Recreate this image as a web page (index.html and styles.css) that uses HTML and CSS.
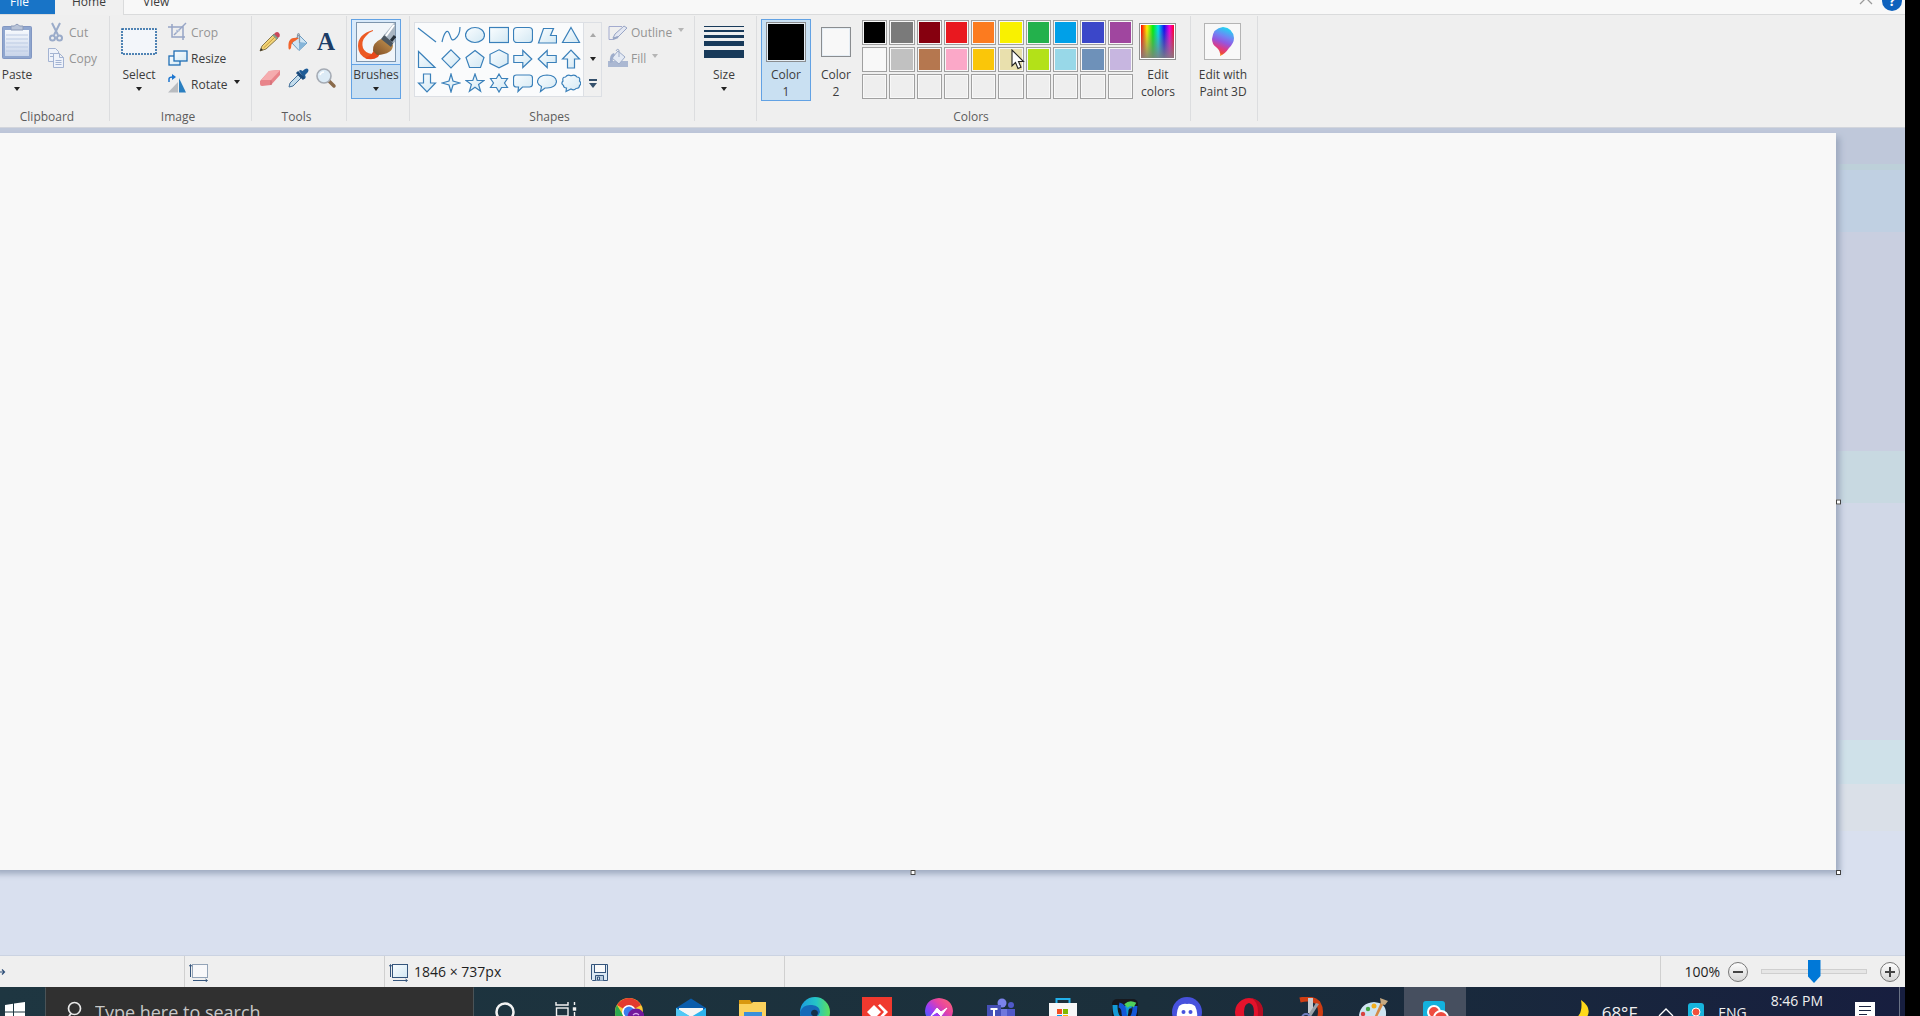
FILE: index.html
```html
<!DOCTYPE html>
<html lang="en">
<head>
    <meta charset="UTF-8">
    <meta name="viewport" content="width=device-width, initial-scale=1.0">
    <title>Untitled - Paint</title>
    <link rel="stylesheet" href="styles.css">
</head>
<body>
<!-- Shared gradients -->
<svg class="defs" width="0" height="0" aria-hidden="true">
    <defs>
        <linearGradient id="shapeFill" x1="0" y1="0" x2="1" y2="1"><stop offset="0" stop-color="#fafdff"/><stop offset="1" stop-color="#d3e8f3"/></linearGradient>
        <linearGradient id="boardFill" x1="0" y1="0" x2="0" y2="1"><stop offset="0" stop-color="#f6f9fd"/><stop offset="1" stop-color="#c9d5ea"/></linearGradient>
        <linearGradient id="rainbow"><stop offset="0" stop-color="#f00"/><stop offset=".18" stop-color="#fe0"/><stop offset=".36" stop-color="#0e1"/><stop offset=".52" stop-color="#0de"/><stop offset=".7" stop-color="#11e"/><stop offset=".86" stop-color="#e0d"/><stop offset="1" stop-color="#f02"/></linearGradient>
        <linearGradient id="greyFade" x1="0" y1="0" x2="0" y2="1"><stop offset=".1" stop-color="#808080" stop-opacity="0"/><stop offset="1" stop-color="#808080" stop-opacity=".9"/></linearGradient>
        <linearGradient id="dropFill" x1=".6" y1="0" x2=".3" y2="1"><stop offset="0" stop-color="#1fd6f2"/><stop offset=".3" stop-color="#6f86f4"/><stop offset=".5" stop-color="#9357e0"/><stop offset=".72" stop-color="#dd3b86"/><stop offset=".88" stop-color="#ee4a3c"/><stop offset="1" stop-color="#ffc400"/></linearGradient>
        <linearGradient id="edgeFill" x1="0" y1="0" x2="1" y2="0"><stop offset="0" stop-color="#1c9be0"/><stop offset=".55" stop-color="#25c5c5"/><stop offset="1" stop-color="#5fe05a"/></linearGradient>
        <linearGradient id="msgFill" x1="1" y1="0" x2="0" y2="1"><stop offset="0" stop-color="#ff6a6a"/><stop offset=".35" stop-color="#e643a5"/><stop offset=".6" stop-color="#9a3cf7"/><stop offset="1" stop-color="#0a7cff"/></linearGradient>
        <linearGradient id="bristle" x1="0" y1="1" x2="1" y2="0"><stop offset="0" stop-color="#7d4a22"/><stop offset="1" stop-color="#c99a55"/></linearGradient>
    </defs>
</svg>

<div class="desktop">
    <!-- Tabs -->
    <nav class="tabs">
        <button class="tab tab-file">File</button>
        <button class="tab tab-home">Home</button>
        <button class="tab tab-view">View</button>
        <div class="tabs-right">
            <button class="icon-btn" aria-label="Minimize the ribbon">
                <svg width="14" height="8" viewBox="0 0 14 8"><path d="M1 7l6-6 6 6" fill="none" stroke="#9a9a9a" stroke-width="1.3"/></svg>
            </button>
            <button class="help">?</button>
        </div>
    </nav>

    <!-- Ribbon -->
    <div class="ribbon">
        <section class="group group-clipboard">
            <div class="group-body">
                <button class="big-btn">
                    <span class="big-icon">
                        <svg width="32" height="38" viewBox="0 0 32 38">
                            <rect x="1.5" y="3.500" width="29" height="32" rx="1" fill="#8fa6cf" stroke="#8297c2"/>
                            <rect x="4" y="7" width="24" height="26" fill="url(#boardFill)"/>
                            <path d="M10 3h3.500q2.500-3.500 5 0H22v4H10z" fill="#b9c4d8" stroke="#8b9ab8"/>
                            <path d="M5 12h22M5 16h22M5 20h22M5 24h22M5 28h22" stroke="#bccbe4"/>
                        </svg>
                    </span>
                    <span class="big-label">Paste</span>
                    <span class="arrow"></span>
                </button>
                <div class="stack">
                    <button class="row-btn off">
                        <svg width="20" height="20" viewBox="0 0 20 20" fill="none" stroke="#9aabc9" stroke-width="2"><path d="M6 1l6 12M14 1L8 13"/><circle cx="6.500" cy="16" r="2.500"/><circle cx="13.500" cy="16" r="2.500"/></svg>
                        Cut
                    </button>
                    <button class="row-btn off">
                        <svg width="20" height="20" viewBox="0 0 20 20" fill="#eef2fa" stroke="#a3b3d2"><path d="M2.500.5h7l3 3v10h-10zM4 5.500h5M4 8.500h5"/><path d="M7.500 5.500h6l4 4v10h-10zM13.500 5.500v4h4M9.500 12.500h6M9.500 14.500h6M9.500 16.500h6"/></svg>
                        Copy
                    </button>
                </div>
            </div>
            <div class="group-name">Clipboard</div>
        </section>

        <section class="group group-image">
            <div class="group-body">
                <button class="big-btn">
                    <span class="big-icon">
                        <svg width="36" height="28" viewBox="0 0 36 28"><rect x="1" y="1" width="34" height="25" fill="#f3f6fa" stroke="#1b5f9e" stroke-width="1.500" stroke-dasharray="2 1"/></svg>
                    </span>
                    <span class="big-label">Select</span>
                    <span class="arrow"></span>
                </button>
                <div class="stack">
                    <button class="row-btn off">
                        <svg width="20" height="20" viewBox="0 0 20 20" fill="none" stroke="#97a5c6" stroke-width="1.500"><path d="M4 2v13h13M0 5h15v13"/><path d="M6 13L18 1"/><path d="M8 8.500h4M8 11h1" stroke="#b9c5dc"/></svg>
                        Crop
                    </button>
                    <button class="row-btn">
                        <svg width="20" height="20" viewBox="0 0 20 20" fill="url(#shapeFill)" stroke="#1f6eb4" stroke-width="1.300"><rect x="1" y="8" width="11" height="9"/><rect x="6" y="3" width="13" height="10"/></svg>
                        Resize
                    </button>
                    <button class="row-btn">
                        <svg width="20" height="20" viewBox="0 0 20 20"><path d="M0 18.500L10 8v10.500z" fill="#b9bcc0"/><path d="M11 18.500V4l7 14.500z" fill="#2a7fc0"/><path d="M1 8V5q0-2 4-2" fill="none" stroke="#1c76d0" stroke-width="1.500"/><path d="M4 0l4 3-4 3z" fill="#1c76d0"/></svg>
                        Rotate <span class="arrow"></span>
                    </button>
                </div>
            </div>
            <div class="group-name">Image</div>
        </section>

        <section class="group group-tools">
            <div class="group-body">
                <div class="tool-grid">
                    <button class="icon-btn" aria-label="Pencil">
                        <svg width="22" height="22" viewBox="0 0 22 22"><path d="M1 20l2-5L15 3l4 4L7 18z" fill="#f2d478" stroke="#6d5a2c" stroke-width=".8"/><path d="M15 3l1.500-1.500q2-1 3.500.5t.5 3.500L19 7z" fill="#c9485b"/><path d="M13.500 4.500L15 3l4 4-1.500 1.500z" fill="#7f9f96"/><path d="M1 20l1-3 2 2z" fill="#333"/><path d="M4.500 17L16.500 5.500" stroke="#c79b3a"/></svg>
                    </button>
                    <button class="icon-btn" aria-label="Fill with color">
                        <svg width="22" height="22" viewBox="0 0 22 22"><path d="M12 4l8 8-8 7.500L5 12z" fill="#cfe5f4" stroke="#6d9cc0"/><path d="M12 11l8 1-8 7.500z" fill="#86b5d9"/><path d="M12.500 12V4q-1-3-2 0v4" fill="none" stroke="#8b98a5" stroke-width="1.200"/><path d="M12 7Q5 6 3 9q-2 2-1.500 8Q2 20 4 17q0-6 4-7z" fill="#f2642c"/></svg>
                    </button>
                    <button class="icon-btn text-tool" aria-label="Text">A</button>
                    <button class="icon-btn" aria-label="Eraser">
                        <svg width="22" height="22" viewBox="0 0 22 22"><path d="M2 13L10 4l10-1q1 0 1 1v4l-9 10-9 1q-2 0-2-2v-3z" fill="#e8848a"/><path d="M2 13L10 4l10-1q1 0 .5 1l-8.500 9z" fill="#f5acae"/><path d="M12 13.500V18" stroke="#c8646c"/></svg>
                    </button>
                    <button class="icon-btn" aria-label="Color picker">
                        <svg width="22" height="22" viewBox="0 0 22 22"><path d="M2 20l1-4 8-8 3 3-8 8z" fill="#c3dcec" stroke="#44719a"/><path d="M12 4l1-1q1.500 0 2.500 1L18 2q2-1 3 0t0 3l-3 3q1 1.500.5 3l-1 1z" fill="#1f5c97"/><path d="M10 5l7 7" stroke="#1a4a7c" stroke-width="3"/></svg>
                    </button>
                    <button class="icon-btn" aria-label="Magnifier">
                        <svg width="22" height="22" viewBox="0 0 22 22"><path d="M14 14l5 5" stroke="#8a6a4a" stroke-width="3.500" stroke-linecap="round"/><circle cx="9" cy="9" r="7" fill="#dcebf6" stroke="#a5abb4" stroke-width="1.600"/><path d="M5 8q1-3 4-3" fill="none" stroke="#fff" stroke-width="1.500"/></svg>
                    </button>
                </div>
            </div>
            <div class="group-name">Tools</div>
        </section>

        <section class="group group-brushes">
            <div class="group-body">
                <button class="big-btn picked split">
                    <span class="big-icon">
                        <svg width="40" height="40" viewBox="0 0 40 40">
                            <rect x=".5" y=".5" width="39" height="39" fill="#f1f5f9" stroke="#7d95ad"/>
                            <path d="M17 8Q2 12 2 24q0 9 9 13l8-1-3-4q-7-1-9-6-2-7 3-12 3-4 7-5z" fill="#ec5a24"/>
                            <path d="M9 36q7 3 13-1l3-5-6-4q-2 7-10 10z" fill="#e8481b"/>
                            <path d="M17 29q-1-8 8-12l6 1 6 5q0 9-16 10z" fill="url(#bristle)"/>
                            <path d="M25 17l4-5 9 8-3 5z" fill="#4b5660"/>
                            <path d="M28 13L38 1h1v19l-2 1z" fill="#a9b6c3"/>
                            <path d="M30 14l8-11" stroke="#fff" stroke-width="2"/>
                            <path d="M35 19l4-5" stroke="#27313b" stroke-width="3"/>
                        </svg>
                    </span>
                    <span class="big-label">Brushes</span>
                    <span class="arrow"></span>
                </button>
            </div>
        </section>

        <section class="group group-shapes">
            <div class="group-body">
                <div class="gallery">
                    <div class="shape-grid">
                        <button class="shape" aria-label="Line"><svg viewBox="0 0 20 20"><path d="M1 3l18 14"/></svg></button>
                        <button class="shape" aria-label="Curve"><svg viewBox="0 0 20 20"><path d="M1 17C3 8 6 4 8 8s2 9 6 6 5-7 5-12" fill="none"/></svg></button>
                        <button class="shape" aria-label="Oval"><svg viewBox="0 0 20 20"><ellipse cx="10" cy="10" rx="9.500" ry="7.500"/></svg></button>
                        <button class="shape" aria-label="Rectangle"><svg viewBox="0 0 20 20"><rect x=".5" y="2.500" width="19" height="15"/></svg></button>
                        <button class="shape" aria-label="Rounded rectangle"><svg viewBox="0 0 20 20"><rect x=".5" y="2.500" width="19" height="15" rx="3.500"/></svg></button>
                        <button class="shape" aria-label="Polygon"><svg viewBox="0 0 20 20"><path d="M6.500 3.500h10l-3 7h6v7.500h-18z"/></svg></button>
                        <button class="shape" aria-label="Triangle"><svg viewBox="0 0 20 20"><path d="M10 2.500L18.500 17.500h-17z"/></svg></button>

                        <button class="shape" aria-label="Right triangle"><svg viewBox="0 0 20 20"><path d="M1.500 2.500l16.500 16h-16.500z"/></svg></button>
                        <button class="shape" aria-label="Diamond"><svg viewBox="0 0 20 20"><path d="M10 .8l9 9-9 9-9-9z"/></svg></button>
                        <button class="shape" aria-label="Pentagon"><svg viewBox="0 0 20 20"><path d="M10 1.500l9 7-3.500 10h-11L1 8.500z"/></svg></button>
                        <button class="shape" aria-label="Hexagon"><svg viewBox="0 0 20 20"><path d="M10 .8l9 4.500v9l-9 4.500-9-4.500v-9z"/></svg></button>
                        <button class="shape" aria-label="Right arrow"><svg viewBox="0 0 20 20"><path d="M.8 6.500h9v-5l9 8.500-9 8.500v-5h-9z"/></svg></button>
                        <button class="shape" aria-label="Left arrow"><svg viewBox="0 0 20 20"><path d="M19.200 6.500h-9v-5l-9 8.500 9 8.500v-5h9z"/></svg></button>
                        <button class="shape" aria-label="Up arrow"><svg viewBox="0 0 20 20"><path d="M6.500 19v-9h-5L10 1l8.500 9h-5v9z"/></svg></button>

                        <button class="shape" aria-label="Down arrow"><svg viewBox="0 0 20 20"><path d="M6.500 1v9h-5l8.500 9 8.500-9h-5V1z"/></svg></button>
                        <button class="shape" aria-label="Four-point star"><svg viewBox="0 0 20 20"><path d="M10 1l2 7 7 2-7 2-2 7-2-7-7-2 7-2z"/></svg></button>
                        <button class="shape" aria-label="Five-point star"><svg viewBox="0 0 20 20"><path d="M10 1l2.200 6.500H19l-5.400 4 2 6.800L10 14.300l-5.600 4 2-6.800L1 7.500h6.800z"/></svg></button>
                        <button class="shape" aria-label="Six-point star"><svg viewBox="0 0 20 20"><path d="M10 1l2.600 4.500H18.500L15.500 10l3 4.500h-5.900L10 19l-2.600-4.500H1.500l3-4.500-3-4.500h5.900z"/></svg></button>
                        <button class="shape" aria-label="Rounded callout"><svg viewBox="0 0 20 20"><path d="M3.500 2h13q3 0 3 3v6q0 3-3 3H9.500l-4.500 4.500.5-4.500h-2q-3 0-3-3V5q0-3 3-3z"/></svg></button>
                        <button class="shape" aria-label="Oval callout"><svg viewBox="0 0 20 20"><path d="M3.500 18.500l1-5Q.5 11.500.5 8.500q.5-6 9.500-6.500 9 .5 9.500 6.500-.5 6-9.500 6.500H8z"/></svg></button>
                        <button class="shape" aria-label="Cloud callout"><svg viewBox="0 0 20 20"><path d="M5 18.500l.5-3.500q-3 0-3-2.500-3-2-.5-4.500Q1 4 4.500 4q2-3 5.500-1.200 4-2 6 1.200 3.500 0 2.500 4 2.500 2.500 0 4.500 0 3-3.500 3-2 2.500-5 .5z"/></svg></button>
                    </div>
                    <div class="gallery-scroll">
                        <button aria-label="Scroll up"><span class="arrow up"></span></button>
                        <button aria-label="Scroll down"><span class="arrow"></span></button>
                        <button aria-label="More shapes"><span class="more"></span><span class="arrow slate"></span></button>
                    </div>
                </div>
                <div class="stack">
                    <button class="row-btn off">
                        <svg width="20" height="20" viewBox="0 0 20 20"><path d="M14 4.500H1v13h4L16 8" fill="none" stroke="#a3abcf"/><path d="M5 16l2-4 9-8 3 2-9 9z" fill="#e3e7f2" stroke="#98a5c5"/><path d="M5 17l5-2" stroke="#98a5c5" stroke-width="2"/></svg>
                        Outline <span class="arrow"></span>
                    </button>
                    <button class="row-btn off">
                        <svg width="20" height="20" viewBox="0 0 20 20"><path d="M0 13h20v6H0z" fill="#abb8d2"/><path d="M10 3l7 6-6 7-7-6z" fill="#e4eaf4" stroke="#9cabc8"/><path d="M11 9V2q-2-2-3 1" fill="none" stroke="#9cabc8"/><path d="M6 5q-5 1-4 10l3-1q-1-4 2-7z" fill="#9eadcb"/></svg>
                        Fill <span class="arrow"></span>
                    </button>
                </div>
            </div>
            <div class="group-name">Shapes</div>
        </section>

        <section class="group group-size">
            <div class="group-body">
                <button class="big-btn">
                    <span class="big-icon">
                        <svg width="40" height="34" viewBox="0 0 40 34" fill="#183a5a"><path d="M0 1h40v1H0zM0 5h40v2H0zM0 10h40v3H0zM0 16h40v5H0zM0 25h40v8H0z"/></svg>
                    </span>
                    <span class="big-label">Size</span>
                    <span class="arrow"></span>
                </button>
            </div>
        </section>

        <section class="group group-colors">
            <div class="group-body">
                <button class="big-btn picked">
                    <span class="big-icon"><span class="well well-front"></span></span>
                    <span class="big-label">Color<br>1</span>
                </button>
                <button class="big-btn">
                    <span class="big-icon"><span class="well well-back"></span></span>
                    <span class="big-label">Color<br>2</span>
                </button>
                <div class="palette">
                    <button class="swatch black" aria-label="Black"></button>
                    <button class="swatch gray" aria-label="Gray-50%"></button>
                    <button class="swatch dark-red" aria-label="Dark red"></button>
                    <button class="swatch red" aria-label="Red"></button>
                    <button class="swatch orange" aria-label="Orange"></button>
                    <button class="swatch yellow" aria-label="Yellow"></button>
                    <button class="swatch green" aria-label="Green"></button>
                    <button class="swatch turquoise" aria-label="Turquoise"></button>
                    <button class="swatch indigo" aria-label="Indigo"></button>
                    <button class="swatch purple" aria-label="Purple"></button>
                    <button class="swatch white" aria-label="White"></button>
                    <button class="swatch light-gray" aria-label="Gray-25%"></button>
                    <button class="swatch brown" aria-label="Brown"></button>
                    <button class="swatch rose" aria-label="Rose"></button>
                    <button class="swatch gold" aria-label="Gold"></button>
                    <button class="swatch light-yellow" aria-label="Light yellow"></button>
                    <button class="swatch lime" aria-label="Lime"></button>
                    <button class="swatch light-turquoise" aria-label="Light turquoise"></button>
                    <button class="swatch blue-gray" aria-label="Blue-gray"></button>
                    <button class="swatch lavender" aria-label="Lavender"></button>
                    <button class="swatch" aria-label="Custom 1"></button>
                    <button class="swatch" aria-label="Custom 2"></button>
                    <button class="swatch" aria-label="Custom 3"></button>
                    <button class="swatch" aria-label="Custom 4"></button>
                    <button class="swatch" aria-label="Custom 5"></button>
                    <button class="swatch" aria-label="Custom 6"></button>
                    <button class="swatch" aria-label="Custom 7"></button>
                    <button class="swatch" aria-label="Custom 8"></button>
                    <button class="swatch" aria-label="Custom 9"></button>
                    <button class="swatch" aria-label="Custom 10"></button>
                    <!-- mouse pointer -->
                    <svg class="pointer" width="14" height="21" viewBox="0 0 14 21"><path d="M1 1v16l3.500-3.500L7 19.500l3-1.200L7.500 12.500h5z" fill="#fff" stroke="#222" stroke-width="1.100"/></svg>
                </div>
                <button class="big-btn">
                    <span class="big-icon">
                        <svg width="38" height="38" viewBox="0 0 38 38"><rect x=".5" y=".5" width="36" height="36" fill="#fff" stroke="#909090"/><rect x="2" y="2" width="33" height="33" fill="url(#rainbow)"/><rect x="2" y="2" width="33" height="33" fill="url(#greyFade)"/></svg>
                    </span>
                    <span class="big-label">Edit<br>colors</span>
                </button>
            </div>
            <div class="group-name">Colors</div>
        </section>

        <section class="group group-3d">
            <div class="group-body">
                <button class="big-btn wide">
                    <span class="big-icon">
                        <svg width="38" height="38" viewBox="0 0 38 38"><rect x=".5" y=".5" width="36" height="36" fill="#f8f8f8" stroke="#b4b4b4"/><path d="M16 33q1-5-4-9-4-3-4-8Q9 5 19 4q10 1 11 11 0 5-5 10-4 6-9 8z" fill="url(#dropFill)"/></svg>
                    </span>
                    <span class="big-label">Edit with<br>Paint 3D</span>
                </button>
            </div>
        </section>
    </div>

    <!-- Drawing area -->
    <main class="workspace">
        <div class="sheet">
            <span class="handle handle-right"></span>
            <span class="handle handle-bottom"></span>
            <span class="handle handle-corner"></span>
        </div>
    </main>

    <!-- Status bar -->
    <footer class="status">
        <div class="status-cell cell-first">
            <svg width="6" height="8" viewBox="0 0 6 8"><path d="M0 4h4M2 1.500L4.500 4 2 6.500" fill="none" stroke="#2e4e78" stroke-width="1.200"/></svg>
        </div>
        <div class="status-cell">
            <svg width="20" height="20" viewBox="0 0 20 20" fill="none" stroke="#35557c"><path d="M1.500 3v12M0 4.500l1.500-2L3 4.500M4 18.500h14M16.500 17l2 1.500-2 1.500"/><rect x="3.500" y="2.500" width="15" height="13" fill="#f8f8fa" stroke-dasharray="1 1"/></svg>
        </div>
        <div class="status-cell">
            <svg width="20" height="20" viewBox="0 0 20 20" fill="none" stroke="#35557c"><path d="M1.500 3v12M0 4.500l1.500-2L3 4.500M4 18.500h14M16.500 17l2 1.500-2 1.500"/><rect x="3.500" y="2.500" width="15" height="13" fill="url(#shapeFill)"/></svg>
            1846 × 737px
        </div>
        <div class="status-cell">
            <svg width="20" height="20" viewBox="0 0 20 20" fill="#dbe8f3" stroke="#35557c"><path d="M2.500 2.500h16v16h-15l-1-1z"/><rect x="5.500" y="2.500" width="11" height="8" fill="#fafafa"/><path d="M6.500 18.500v-5h8v5M8.500 15v3h2v-3z" fill="#b8cbdd"/></svg>
        </div>
        <div class="zoom">
            <label for="zoom">100%</label>
            <button class="round" aria-label="Zoom out"><svg width="12" height="12" viewBox="0 0 12 12"><path d="M1 6h10" stroke="#444" stroke-width="2"/></svg></button>
            <input type="range" id="zoom" min="0" max="100" value="50">
            <button class="round" aria-label="Zoom in"><svg width="12" height="12" viewBox="0 0 12 12"><path d="M1 6h10M6 1v10" stroke="#444" stroke-width="2"/></svg></button>
        </div>
    </footer>

    <!-- Taskbar -->
    <div class="taskbar">
        <button class="start" aria-label="Start">
            <svg width="20" height="20" viewBox="0 0 20 20" fill="#fff"><path d="M0 3l8-1.200v7.700H0zM9 1.600L20 0v9.500H9zM0 10.500h8v7.700L0 17zM9 10.500h11V20L9 18.400z"/></svg>
        </button>
        <label class="search">
            <svg width="18" height="22" viewBox="0 0 18 22" fill="none" stroke="#e8e8e8" stroke-width="1.700"><circle cx="9.500" cy="7.500" r="6"/><path d="M6 12.500l-5 7"/></svg>
            <input type="text" placeholder="Type here to search" aria-label="Search">
        </label>
        <div class="apps">
            <button class="app" aria-label="Cortana"><svg viewBox="0 0 30 30"><circle cx="15" cy="15" r="8.500" fill="none" stroke="#f2f2f2" stroke-width="2.500"/></svg></button>
            <button class="app" aria-label="Task View"><svg viewBox="0 0 30 30" fill="none" stroke="#f2f2f2" stroke-width="1.400"><path d="M4 5v3h12V5M4 25v-3h12v3M22.500 5v3M22.500 15v10"/><rect x="4.500" y="11" width="11.500" height="8"/><rect x="21.500" y="11" width="2" height="2" fill="#fff"/></svg></button>
            <button class="app" aria-label="Chrome"><svg viewBox="0 0 30 30"><circle cx="15" cy="15" r="14" fill="#fcc934"/><path d="M15 15L2.900 8A14 14 0 0 1 27.100 8z" fill="#e33b2e"/><path d="M2.900 8A14 14 0 0 0 15 29l6-11-12 0z" fill="#2da94f"/><circle cx="15" cy="15" r="7" fill="#fff"/><circle cx="15" cy="15" r="5.400" fill="#3b7ded"/><circle cx="22" cy="20" r="8.500" fill="#74189b"/><path d="M19 18q3-3 6 0" fill="none" stroke="#d9a8ec" stroke-width="1.200"/></svg></button>
            <button class="app" aria-label="Mail"><svg viewBox="0 0 30 30"><path d="M0 11L15 1.500 30 11v3H0z" fill="#0b5cab"/><path d="M3 11h24v9H3z" fill="#f5f5f5"/><path d="M0 11l15 9 15-9v17H0z" fill="#2cb3ee"/><path d="M0 11l15 9L0 28z" fill="#52c8f5"/></svg></button>
            <button class="app" aria-label="File Explorer"><svg viewBox="0 0 30 30"><path d="M1 3h11l2 3h14v20H1z" fill="#d9980f"/><path d="M1 7h12l2-2h13v21H1z" fill="#fbd15d"/><path d="M6 15h18v11H6z" fill="#3b8fd9"/></svg></button>
            <button class="app" aria-label="Edge"><svg viewBox="0 0 30 30"><circle cx="15" cy="15" r="15" fill="url(#edgeFill)"/><path d="M0 15Q3 7 12 8q8 1 8 7-1 3-3 4 3 4 11 2-5 9-14 9Q1 28 0 15z" fill="#1569b8"/><path d="M13 13q4-1 5 3-1 3-2 4-5-1-5-4 0-2 2-3z" fill="#13314a"/></svg></button>
            <button class="app" aria-label="AnyDesk"><svg viewBox="0 0 30 30"><path d="M0 0h30v30H0z" fill="#f0392e"/><path d="M12 8l7 7-7 7-7-7z" fill="#fff"/><path d="M16 8.500l2-1.500 8 8-8 8-2-1.500 6-6.500z" fill="#fff"/></svg></button>
            <button class="app" aria-label="Messenger"><svg viewBox="0 0 30 30"><path d="M15 1q13 1 14 13-1 12-14 12.500l-4 0-4 2.500v-5Q1 20 1 14 2 2 15 1z" fill="url(#msgFill)"/><path d="M7 19l6-8 4 4 6-4-6 8-4-4z" fill="#fff" stroke="#fff"/></svg></button>
            <button class="app" aria-label="Teams"><svg viewBox="0 0 30 30"><circle cx="16" cy="6" r="4.500" fill="#7b83eb"/><circle cx="25" cy="8" r="3" fill="#5059c9"/><path d="M20 12h9v9q-3 6-9 2z" fill="#5059c9"/><path d="M8 12h13v9q-2 8-10 5z" fill="#7078dd"/><path d="M1 8h14v16H1z" fill="#4650b8"/><path d="M4.500 12h7M8 12v9" stroke="#fff" stroke-width="2"/></svg></button>
            <button class="app" aria-label="Microsoft Store"><svg viewBox="0 0 30 30"><path d="M8.500 7V2h13v5" fill="none" stroke="#22b0ea" stroke-width="2"/><path d="M1 6h28v22q0 1-1 1H2q-1 0-1-1z" fill="#f7f7f7"/><path d="M9 12h5v5H9z" fill="#f25022"/><path d="M15 12h5v5h-5z" fill="#7fba00"/><path d="M9 18h5v5H9z" fill="#00a4ef"/><path d="M15 18h5v5h-5z" fill="#ffb900"/></svg></button>
            <button class="app" aria-label="Webex"><svg viewBox="0 0 30 30" fill="none" stroke-width="5"><rect x="2" y="2" width="26" height="26" rx="5" fill="#17181d"/><path d="M5 8q0 13 6 14 5-1 5-9 1-5 6-4" stroke="#139ad6"/><path d="M9 8q5 1 5 8 1 7 6 6 5-2 5-13" stroke="#1557d8"/><path d="M16 9q4-4 9-1" stroke="#4fd15c"/></svg></button>
            <button class="app" aria-label="Discord"><svg viewBox="0 0 30 30"><circle cx="15" cy="15" r="15" fill="#4752dd"/><path d="M7 9q4-3 8-2 4-1 8 2 3 6 2 11-3 3-5 2l-1-2h-8l-1 2q-2 1-5-2-1-5 2-11z" fill="#fff"/><circle cx="11.500" cy="15" r="2" fill="#4752dd"/><circle cx="18.500" cy="15" r="2" fill="#4752dd"/></svg></button>
            <button class="app" aria-label="Opera"><svg viewBox="0 0 30 30"><path fill-rule="evenodd" d="M15 1a14 14 0 1 0 .01 0zM15 6q5 1 5 9t-5 9q-5-1-5-9t5-9z" fill="#e3122b"/><path d="M17 1q12 2 12 14T17 29q7-3 7-14T17 1z" fill="#b50d22"/></svg></button>
            <button class="app" aria-label="Snipping tool"><svg viewBox="0 0 30 30"><path d="M4 3q12-3 18 3 5 8 0 19" fill="none" stroke="#cf3d13" stroke-width="5"/><path d="M12 1h5v15h-5z" fill="#c7cbd0"/><path d="M23 7l-9 14-2-3 8-12z" fill="#9aa1a8"/><circle cx="10" cy="21" r="4" fill="none" stroke="#6f7fc0" stroke-width="2"/></svg></button>
            <button class="app" aria-label="Paint"><svg viewBox="0 0 30 30"><path d="M1 18Q3 6 16 5q13 1 12 13-1 10-14 10-4 0-2-5 1-4-4-2-6 2-7-3z" fill="#cfe4f1"/><circle cx="5" cy="17" r="2.200" fill="#d8423e"/><circle cx="10" cy="12" r="2.200" fill="#44a744"/><circle cx="16" cy="9" r="2.500" fill="#f3ae1d"/><path d="M26 6l-8 16-2-1 7-16z" fill="#d38b45"/><path d="M22 1l8 3-3 4-4-1z" fill="#c5a880"/></svg></button>
            <button class="app active" aria-label="Screen recorder"><svg viewBox="0 0 30 30"><rect x="3" y="4" width="22" height="24" rx="3" fill="#13b2dd"/><circle cx="14" cy="15" r="6" fill="#ef4c40" stroke="#fff" stroke-width="2"/><circle cx="21" cy="21" r="7" fill="#ef4c40" stroke="#fff" stroke-width="2"/></svg></button>
        </div>
        <div class="tray">
            <button class="weather">
                <svg width="18" height="24" viewBox="0 0 18 24"><path d="M10 0q10 7 7 15-5 9-17 4 9-1 10-9 1-5 0-10z" fill="#ffd91a"/></svg>
                68°F
            </button>
            <button class="icon-btn" aria-label="Show hidden icons"><svg width="16" height="10" viewBox="0 0 16 10"><path d="M1 9l7-7 7 7" fill="none" stroke="#fff" stroke-width="1.300"/></svg></button>
            <button class="icon-btn" aria-label="Recorder"><svg width="16" height="18" viewBox="0 0 16 18"><rect width="16" height="18" rx="3" fill="#17b4dc"/><circle cx="8" cy="9" r="4" fill="#f0503c" stroke="#fff"/></svg></button>
            <button class="lang">ENG</button>
            <button class="clock">8:46 PM</button>
            <button class="icon-btn notes" aria-label="Notifications"><svg width="20" height="20" viewBox="0 0 20 20"><path d="M0 0h20v16h-5v4l-4-4H0z" fill="#fff"/><path d="M4 4.500h12M4 8.500h12M4 12.500h8" stroke="#1a2340" stroke-width="1.200"/></svg></button>
            <button class="show-desktop" aria-label="Show desktop"></button>
        </div>
    </div>
</div>
</body>
</html>
```

FILE: styles.css
```css
* {
    margin: 0;
    padding: 0;
    box-sizing: border-box;
}
body {
    height: 100vh;
    overflow: hidden;
    padding-right: 15px;
    background: #000;
    color: #3c3c3c;
    font-family: "Open Sans", "Noto Sans", sans-serif;
    font-size: 12px;
}
button, input {
    font: inherit;
    color: inherit;
    background: none;
    border: none;
}
svg {
    display: block;
    flex: none;
}
.defs {
    position: absolute;
}
/* tabs and taskbar both run past the window edge */
.desktop {
    display: flex;
    flex-direction: column;
    height: calc(100vh + 21px);
}

/* Tabs */
.tabs {
    display: flex;
    align-items: stretch;
    height: 27px;
    margin-top: -12px;
    flex: none;
    background: #f8f8f8;
    border-bottom: 1px solid #dadbdc;
}
.tab {
    text-align: left;
}
.tab-file {
    width: 55px;
    padding-left: 10px;
    background: #1874c7;
    color: #fff;
}
.tab-home {
    width: 69px;
    padding-left: 17px;
    margin-bottom: -1px;
    background: #f0f0f0;
    border-right: 1px solid #dadbdc;
}
.tab-view {
    padding-left: 19px;
}
.tabs-right {
    display: flex;
    align-items: center;
    gap: 9px;
    margin-left: auto;
    padding-right: 3px;
}
.help {
    width: 20px;
    height: 20px;
    border-radius: 50%;
    background: #0f62bd;
    color: #fff;
    font-size: 14px;
    font-weight: 700;
    line-height: 20px;
}

/* Ribbon */
.ribbon {
    display: flex;
    height: 113px;
    flex: none;
    padding: 1px 0 6px;
    background: #efefef;
    border-bottom: 1px solid #d2d5dc;
}
.group {
    display: flex;
    flex-direction: column;
    justify-content: space-between;
    border-right: 1px solid #dcdddf;
}
.group-body {
    display: flex;
    padding: 3px 4px 0;
}
.group-name {
    margin: 0 5px -4px 0;
    line-height: 16px;
    text-align: center;
    color: #5c5c5c;
}
.group-clipboard {
    width: 125px;
    margin-left: -15px;
}
.group-clipboard .group-name {
    margin-right: 0;
}
.group-image {
    width: 142px;
}
.group-tools {
    width: 95px;
}
.group-brushes {
    width: 63px;
}
.group-shapes {
    width: 285px;
}
.group-size {
    width: 62px;
}
.group-colors {
    width: 434px;
}
.group-3d {
    width: 67px;
}
.group-clipboard .group-body {
    padding-left: 7px;
}
.group-image .group-body {
    padding-left: 4px;
}

.big-btn {
    display: flex;
    flex-direction: column;
    align-items: center;
    width: 50px;
    height: 82px;
    flex: none;
    padding-top: 2px;
    border: 1px solid transparent;
}
.big-btn.wide {
    width: 56px;
}
.big-btn.picked {
    background: #c9e0f2;
    border-color: #62a2e4;
}
.big-btn.split {
    height: 80px;
    background: linear-gradient(#d9eafa 44px, #62a2e4 44px, #62a2e4 45px, #c9dff1 45px);
}
.big-icon {
    display: flex;
    align-items: center;
    justify-content: center;
    height: 40px;
}
.big-label {
    margin-top: 4px;
    line-height: 17px;
    white-space: nowrap;
}
.arrow {
    border: 3px solid transparent;
    border-top: 4px solid #222;
    border-bottom: none;
}
.big-btn .arrow {
    margin-top: 4px;
}
.arrow.up {
    border-top: none;
    border-bottom: 4px solid #a8a8a8;
}
.arrow.slate {
    border-width: 5px 4px 0;
    border-top-color: #34506c;
}

.stack {
    display: flex;
    flex-direction: column;
}
.row-btn {
    display: flex;
    align-items: center;
    gap: 3px;
    height: 26px;
    white-space: nowrap;
}
.row-btn .arrow {
    margin: -4px 0 0 3px;
}
.off {
    color: #949494;
}
.off .arrow {
    border-top-color: #b5b5b5;
}
.group-clipboard .stack,
.group-image .stack {
    padding-left: 4px;
}
.icon-btn {
    display: flex;
    align-items: center;
    justify-content: center;
}
.tool-grid {
    display: grid;
    grid-template-columns: repeat(3, 28px);
    grid-auto-rows: 36px;
    padding-top: 5px;
}
.text-tool {
    font-family: "Liberation Serif", serif;
    font-size: 25px;
    font-weight: 700;
    color: #1c3d66;
}

/* Shapes gallery */
.gallery {
    display: flex;
    height: 75px;
    margin: 3px 6px 0 0;
    border: 1px solid #dcdfe4;
    background: #fafbfc;
}
.shape-grid {
    display: grid;
    grid-template-columns: repeat(7, 24px);
    grid-auto-rows: 24px;
}
.shape {
    display: flex;
    align-items: center;
    justify-content: center;
}
.shape svg {
    width: 20px;
    height: 20px;
    fill: url(#shapeFill);
    stroke: #3a80ba;
    stroke-width: 1.2;
}
.gallery-scroll {
    display: flex;
    flex-direction: column;
    width: 18px;
    background: #f0f0f0;
    border-left: 1px solid #dcdfe4;
}
.gallery-scroll button {
    display: flex;
    flex-direction: column;
    align-items: center;
    justify-content: center;
    gap: 2px;
    height: 24px;
}
.more {
    width: 8px;
    height: 2px;
    background: #34506c;
}

/* Colors */
.well {
    width: 40px;
    height: 40px;
    border: 1px solid #8a8d90;
    box-shadow: inset 0 0 0 1px #e6eef5;
}
.well-front {
    background: #000;
}
.well-back {
    width: 30px;
    height: 30px;
    background: #f8f8f8;
}
.palette {
    position: relative;
    display: grid;
    grid-template-columns: repeat(10, 1fr);
    grid-auto-rows: 25px;
    gap: 2px;
    width: 271px;
    margin: 1px 0 0 1px;
}
.swatch {
    border: 1px solid #a0a0a0;
    box-shadow: inset 0 0 0 1px #f8f8f8;
    background: #eeeeee;
}
.pointer {
    position: absolute;
    left: 149px;
    top: 29px;
}
.black { background: #000; }
.gray { background: #7a7a7a; }
.dark-red { background: #86000f; }
.red { background: #e9181f; }
.orange { background: #fc7b1f; }
.yellow { background: #f9f100; }
.green { background: #23b14c; }
.turquoise { background: #00a0e8; }
.indigo { background: #3b47c9; }
.purple { background: #a0469f; }
.white { background: #f8f8f8; }
.light-gray { background: #c1c1c1; }
.brown { background: #b5774f; }
.rose { background: #fba8c8; }
.gold { background: #fac609; }
.light-yellow { background: #e9e0ad; }
.lime { background: #b3e118; }
.light-turquoise { background: #98d8e8; }
.blue-gray { background: #6e91b9; }
.lavender { background: #c7b6e0; }

/* Drawing area */
.workspace {
    display: flex;
    flex: 1;
    min-height: 0;
    padding: 5px 69px 85px 0;
    background: linear-gradient(#bfc8da 36px, #bdd0d9 36px, #bdd0d9 42px, #c0d0e2 42px, #c0d0e2 104px, #c9cfe0 104px, #c9cfe0 323px, #c8d9e1 323px, #c8d9e1 375px, #d1d8e7 375px, #d1d8e7 612px, #cfe1e9 612px, #cfe1e9 656px, #dae0e8 656px, #dae0e8 703px, #d9e0ef 703px);
}
.sheet {
    position: relative;
    flex: 1;
    margin-left: -10px;
    background: #f8f8f8;
    box-shadow: 4px 4px 6px #9fabc0;
}
.handle {
    position: absolute;
    width: 5px;
    height: 5px;
    background: #fff;
    border: 1px solid #444;
}
.handle-right {
    left: 100%;
    top: 50%;
    transform: translateY(-50%);
}
.handle-bottom {
    left: 50%;
    top: 100%;
    transform: translateX(-50%);
}
.handle-corner {
    left: 100%;
    top: 100%;
}

/* Status bar */
.status {
    display: flex;
    height: 32px;
    flex: none;
    background: #efefef;
    border-top: 1px solid #cbd3e2;
    color: #1e1e1e;
    font-size: 14px;
}
.status-cell {
    display: flex;
    align-items: center;
    gap: 5px;
    width: 200px;
    padding-left: 4px;
    border-right: 1px solid #d0d0d0;
}
.status-cell.cell-first {
    width: 185px;
    padding-left: 0;
}
.zoom {
    display: flex;
    align-items: center;
    gap: 13px;
    margin-left: auto;
    padding: 0 5px 0 23px;
    border-left: 1px solid #d0d0d0;
}
.zoom label {
    margin-right: -5px;
}
.round {
    display: flex;
    align-items: center;
    justify-content: center;
    width: 20px;
    height: 20px;
    border: 1px solid #777;
    border-radius: 50%;
    background: linear-gradient(#fdfdfd, #d6d6d6);
}
.zoom input {
    appearance: none;
    width: 106px;
    height: 24px;
}
.zoom input::-webkit-slider-runnable-track {
    height: 5px;
    background: #e6e6e6;
    border: 1px solid #cfcfcf;
}
.zoom input::-webkit-slider-thumb {
    appearance: none;
    width: 13px;
    height: 23px;
    margin-top: -10px;
    background: #0078d7;
    clip-path: polygon(0 0, 100% 0, 100% 70%, 50% 100%, 0 70%);
}

/* Taskbar */
.taskbar {
    display: flex;
    height: 50px;
    flex: none;
    background: linear-gradient(90deg, #1e3641, #1b2f3b 60%, #192a3c 75%, #171e3f);
    color: #f0f0f0;
    font-size: 14px;
}
.start {
    width: 45px;
    padding-left: 5px;
}
.search {
    display: flex;
    align-items: center;
    gap: 12px;
    width: 429px;
    padding-left: 19px;
    background: #303030;
    border: 1px solid #4a5357;
    border-top-color: #303030;
}
.search input {
    flex: 1;
    min-width: 0;
    font-size: 18px;
}
.search input::placeholder {
    color: #c8c8c8;
}
.apps {
    display: flex;
}
.app {
    display: flex;
    align-items: center;
    justify-content: center;
    width: 62px;
}
.app svg {
    width: 30px;
    height: 30px;
}
.app.active {
    background: #464f5f;
}
.tray {
    display: flex;
    align-items: center;
    gap: 14px;
    margin-left: auto;
}
.weather {
    display: flex;
    align-items: center;
    gap: 13px;
    margin-right: 7px;
    font-size: 17px;
}
.clock {
    align-self: flex-start;
    padding: 4px 10px;
}
.notes {
    padding: 0 10px 0 8px;
}
.show-desktop {
    align-self: stretch;
    width: 6px;
    border-left: 1px solid #6a7285;
}
```
